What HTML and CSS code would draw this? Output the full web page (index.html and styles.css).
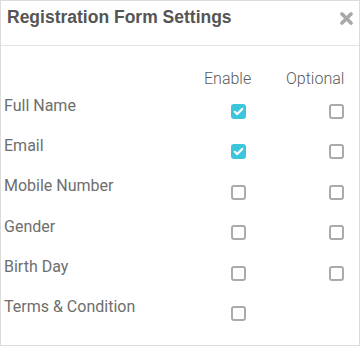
FILE: index.html
```html
<!DOCTYPE html>
<html>
<head>
<meta charset="utf-8">
<link rel="stylesheet" href="styles.css">
</head>
<body>
<div class="dialog">
  <div class="header">
    <h1 class="title">Registration Form Settings</h1>
    <span class="close" aria-label="Close">
      <svg width="13" height="13" viewBox="0 0 13 13"><path d="M2 2 L11 11 M11 2 L2 11" stroke="#a8a8a8" stroke-width="3.6" stroke-linecap="round"/></svg>
    </span>
  </div>
  <div class="body">
    <div class="grid">
      <div class="head-label"></div>
      <div class="col-head enable">Enable</div>
      <div class="col-head optional">Optional</div>

      <div class="label">Full Name</div>
      <div class="cell enable"><span class="cb checked"><svg viewBox="0 0 15 15" width="15" height="15"><path d="M3.8 7.8 L6.3 10.1 L11.2 4.9" fill="none" stroke="#fff" stroke-width="2.2" stroke-linecap="round" stroke-linejoin="round"/></svg></span></div>
      <div class="cell optional"><span class="cb"></span></div>

      <div class="label">Email</div>
      <div class="cell enable"><span class="cb checked"><svg viewBox="0 0 15 15" width="15" height="15"><path d="M3.8 7.8 L6.3 10.1 L11.2 4.9" fill="none" stroke="#fff" stroke-width="2.2" stroke-linecap="round" stroke-linejoin="round"/></svg></span></div>
      <div class="cell optional"><span class="cb"></span></div>

      <div class="label">Mobile Number</div>
      <div class="cell enable"><span class="cb"></span></div>
      <div class="cell optional"><span class="cb"></span></div>

      <div class="label">Gender</div>
      <div class="cell enable"><span class="cb"></span></div>
      <div class="cell optional"><span class="cb"></span></div>

      <div class="label">Birth Day</div>
      <div class="cell enable"><span class="cb"></span></div>
      <div class="cell optional"><span class="cb"></span></div>

      <div class="label">Terms &amp; Condition</div>
      <div class="cell enable"><span class="cb"></span></div>
      <div class="cell optional"></div>
    </div>
  </div>
</div>
</body>
</html>
```

FILE: styles.css
```css
html, body {
  margin: 0;
  padding: 0;
  background: #fff;
}
.dialog {
  box-sizing: border-box;
  width: 360px;
  height: 346px;
  border: 1px solid #dcdcdc;
  background: #fff;
}
.header {
  box-sizing: border-box;
  height: 45px;
  border-bottom: 1px solid #e3e3e3;
  display: flex;
  align-items: flex-start;
  justify-content: space-between;
  padding: 0 6px 0 6px;
}
.title {
  margin: 0;
  padding-top: 5px;
  font-family: "Liberation Sans", Arial, sans-serif;
  font-weight: bold;
  font-size: 17.5px;
  line-height: 22px;
  color: #555;
}
.close {
  display: flex;
  padding-top: 11px;
}
.body {
  padding: 23px 14px 0 3px;
}
.grid {
  display: grid;
  grid-template-columns: 1fr 48px 59px;
  grid-template-rows: 26.5px;
  column-gap: 34px;
  grid-auto-rows: 40.4px;
  font-family: Roboto, "Liberation Sans", sans-serif;
  font-size: 16px;
  line-height: 20px;
  color: #6e6e6e;
}
.col-head {
  white-space: nowrap;
  font-weight: 300;
  color: #5a5a5a;
}
.label {
  white-space: nowrap;
}
.cell {
  display: flex;
  padding-top: 8.5px;
}
.cell.enable .cb {
  margin-left: 27px;
}
.cell.optional .cb {
  margin-left: 43px;
}
.cb {
  box-sizing: border-box;
  display: block;
  width: 15px;
  height: 15px;
  border: 2px solid #ababab;
  border-radius: 3px;
  background: #fff;
}
.cb.checked {
  border: none;
  background: #3cc6dc;
}
.cb svg {
  display: block;
}
```
